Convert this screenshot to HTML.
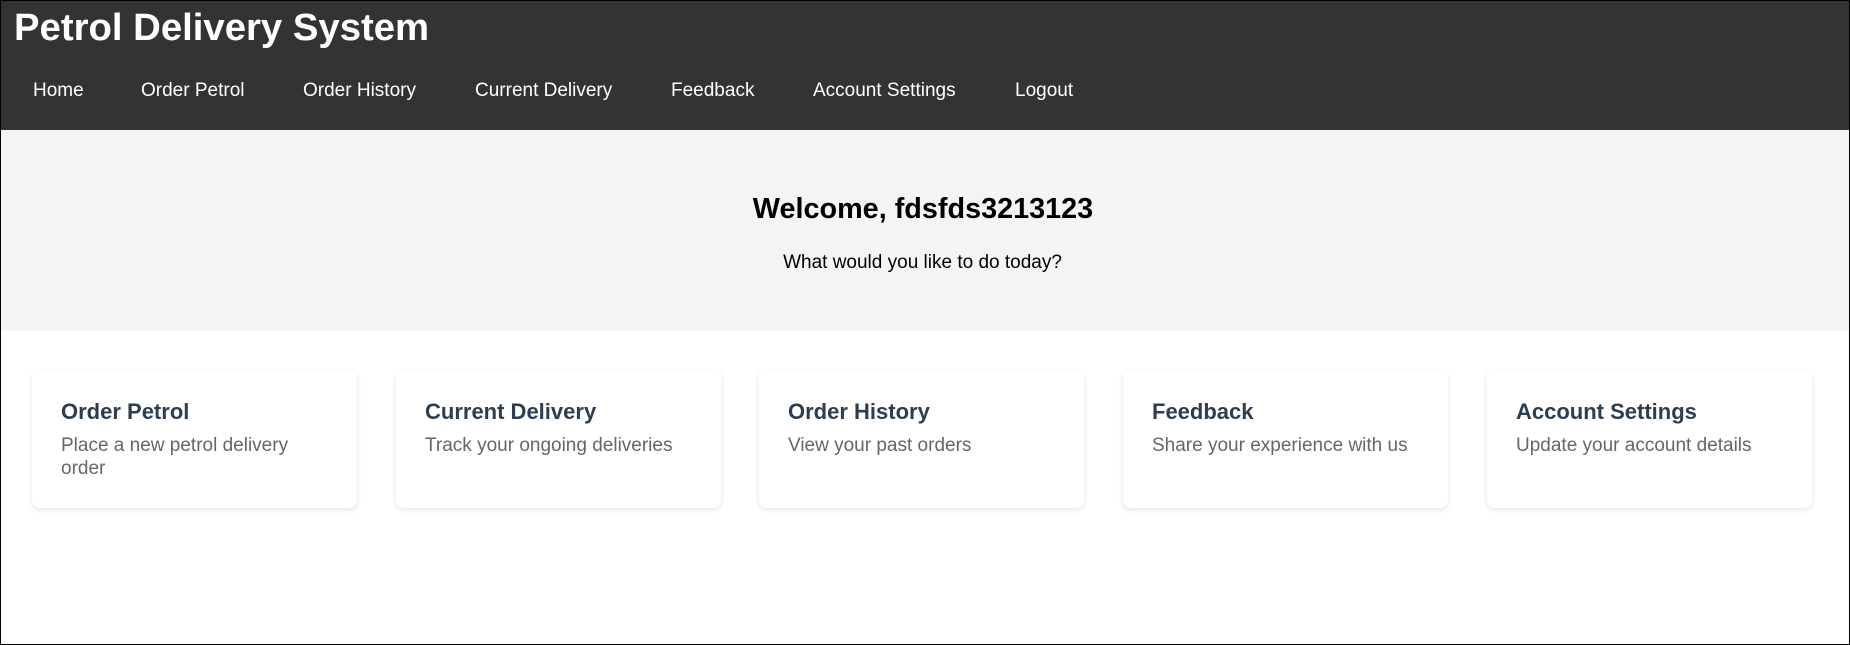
<!DOCTYPE html>
<html><head><style>
*{margin:0;padding:0;box-sizing:border-box}
html,body{width:1850px;height:645px;overflow:hidden;background:#fff;font-family:"Liberation Sans",Arial,sans-serif}
.frame{position:absolute;left:0;top:0;width:1850px;height:645px;border:1px solid #000}
header{position:absolute;left:0;top:0;width:1850px;height:130px;background:#333;color:#fff}
h1{position:absolute;left:14px;top:5px;font-size:38.3px;font-weight:bold;line-height:46px}
.nav a{position:absolute;top:79px;font-size:19px;line-height:24px;color:#fff;text-decoration:none}
.welcome{position:absolute;left:0;top:130px;width:1850px;height:201px;background:#f4f4f4}
.card{position:absolute;top:370px;width:325px;height:138px;background:#fff;border-radius:8px;box-shadow:0 2px 6px rgba(0,0,0,0.1)}
.card h3{position:absolute;left:29px;top:28px;font-size:22px;line-height:27px;color:#2c3e50}
.card p{font-size:19px;line-height:23px;color:#666;position:absolute;left:29px;top:64px;width:270px}
</style></head><body>
<header>
<h1>Petrol Delivery System</h1>
<div class="nav">
<a style="left:33px">Home</a>
<a style="left:141px">Order Petrol</a>
<a style="left:303px">Order History</a>
<a style="left:475px">Current Delivery</a>
<a style="left:671px">Feedback</a>
<a style="left:813px">Account Settings</a>
<a style="left:1015px">Logout</a>
</div>
</header>
<div class="welcome"></div>
<div style="position:absolute;left:0;top:0;width:1850px;text-align:center">
<div style="position:absolute;left:0;width:100%;top:192px;font-size:28.8px;line-height:34px;font-weight:bold;padding-right:4px">Welcome, fdsfds3213123</div>
<div style="position:absolute;left:0;width:100%;top:251px;font-size:19px;line-height:23px;padding-right:5px">What would you like to do today?</div>
</div>
<div class="card" style="left:32px"><h3>Order Petrol</h3><p>Place a new petrol delivery order</p></div>
<div class="card" style="left:396px"><h3>Current Delivery</h3><p>Track your ongoing deliveries</p></div>
<div class="card" style="left:759px"><h3>Order History</h3><p>View your past orders</p></div>
<div class="card" style="left:1123px"><h3>Feedback</h3><p>Share your experience with us</p></div>
<div class="card" style="left:1487px"><h3>Account Settings</h3><p>Update your account details</p></div>
<div class="frame"></div>
</body></html>
